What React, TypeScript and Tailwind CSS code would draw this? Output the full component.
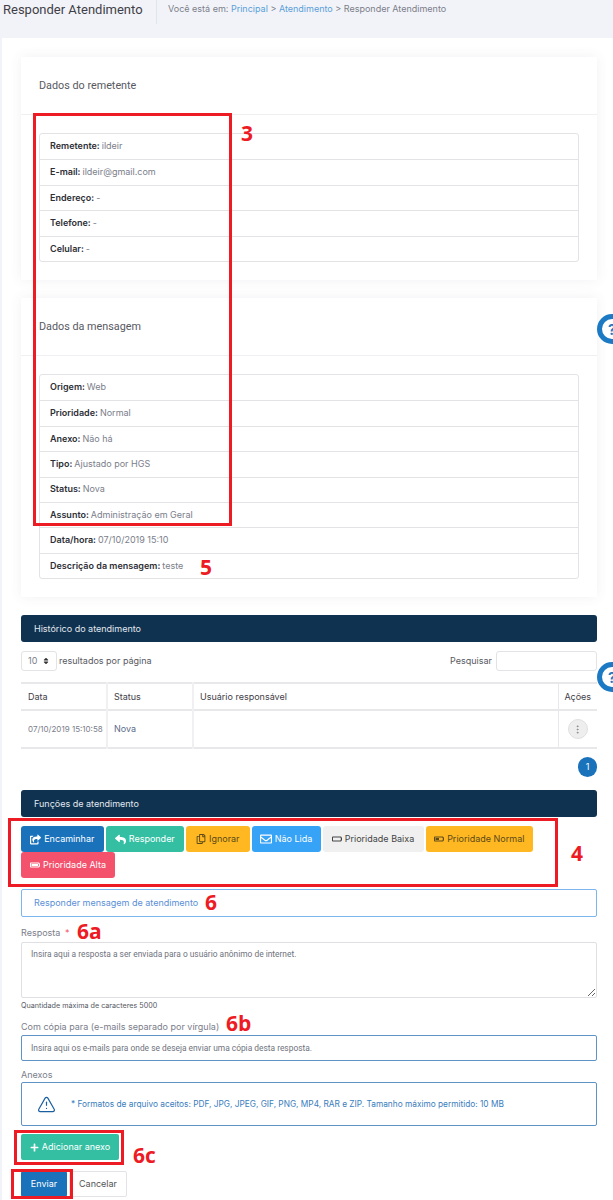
import React from 'react';
import { FaShareSquare, FaReply, FaRegCopy, FaRegEnvelope, FaBatteryEmpty, FaBatteryHalf, FaBatteryFull, FaPlus, FaSort } from 'react-icons/fa';
import { TriangleAlert, MoreVertical } from 'lucide-react';

const remetente = [
  ['Remetente:', 'ildeir'],
  ['E-mail:', 'ildeir@gmail.com'],
  ['Endereço:', '-'],
  ['Telefone:', '-'],
  ['Celular:', '-'],
];

const mensagem = [
  ['Origem:', 'Web'],
  ['Prioridade:', 'Normal'],
  ['Anexo:', 'Não há'],
  ['Tipo:', 'Ajustado por HGS'],
  ['Status:', 'Nova'],
  ['Assunto:', 'Administração em Geral'],
  ['Data/hora:', '07/10/2019 15:10'],
  ['Descrição da mensagem:', 'teste'],
];

const acoes = [
  { label: 'Encaminhar', icon: <FaShareSquare size={11} />, cls: 'w-[82.5px] bg-[#1a72bb] text-white' },
  { label: 'Responder', icon: <FaReply size={11} />, cls: 'w-[78.5px] bg-[#34bfa3] text-white' },
  { label: 'Ignorar', icon: <FaRegCopy size={10} />, cls: 'w-[63.5px] bg-[#ffb822] text-[#5c4a1a]' },
  { label: 'Não Lida', icon: <FaRegEnvelope size={12} />, cls: 'w-[69px] bg-[#36a3f7] text-white' },
  { label: 'Prioridade Baixa', icon: <FaBatteryEmpty size={10} />, cls: 'w-[101px] bg-[#f0f0f0] text-[#444]' },
  { label: 'Prioridade Normal', icon: <FaBatteryHalf size={10} />, cls: 'w-[107.5px] bg-[#ffb822] text-[#5c4a1a]' },
  { label: 'Prioridade Alta', icon: <FaBatteryFull size={10} />, cls: 'w-[94px] bg-[#f4516c] text-white' },
];

function DadosCard({ titulo, linhas }: { titulo: string; linhas: string[][] }) {
  return (
    <section className="bg-white shadow-[0_0_12px_rgba(80,80,120,0.08)]">
      <h3 className="flex h-[58px] items-center border-b border-[#f0f0f3] pt-[1px] pl-[18px] font-['Roboto',sans-serif] text-[10.8px] text-[#575962]">
        {titulo}
      </h3>
      <div className="p-[18px]">
        <ul className="rounded-[3px] border border-[#e3e3e6]">
          {linhas.map(([k, v], i) => (
            <li
              key={k}
              className={`flex h-[25.4px] items-center pb-[1px] pl-[10px] text-[9px] text-[#7b7e8a] ${i > 0 ? 'border-t border-[#e3e3e6]' : ''}`}
            >
              <b className="mr-[2px] font-semibold text-[#2e2f36]">{k}</b>
              {v}
            </li>
          ))}
        </ul>
      </div>
    </section>
  );
}

function BarraTitulo({ titulo }: { titulo: string }) {
  return (
    <div className="flex h-[27px] items-center rounded-[3px] bg-[#0e3250] pl-[13px] text-[9px] text-[#e4e8ee]">
      {titulo}
    </div>
  );
}

function Marca({ className, children }: { className: string; children: React.ReactNode }) {
  return (
    <span className={`absolute font-['Open_Sans',sans-serif] text-[21px] leading-none font-bold text-[#ed1c24] ${className}`}>
      {children}
    </span>
  );
}

function Ajuda({ top }: { top: string }) {
  return (
    <div className={`absolute left-[597px] flex h-[30px] w-[30px] items-center justify-center rounded-full border-[5px] border-[#1b7ac3] bg-white text-[14px] font-bold text-[#1b7ac3] ${top}`}>
      ?
    </div>
  );
}

export default function App() {
  return (
    <div className="relative h-[1200px] w-[613px] overflow-hidden bg-[#f2f3f8] font-['Inter',sans-serif]">
      {/* topo */}
      <header className="flex h-[38px] items-start">
        <h1 className="w-[142px] pl-[3px] font-['Roboto',sans-serif] text-[13px] leading-[19px] whitespace-nowrap text-[#3f4047]">
          Responder Atendimento
        </h1>
        <div className="ml-[14px] h-[24px] w-px bg-[#e2e4ec]" />
        <p className="ml-[11px] pt-[2px] text-[9px] leading-[14px] text-[#7b7e8a]">
          Você está em: <span className="text-[#5a9fd8]">Principal</span> &gt;{' '}
          <span className="text-[#5a9fd8]">Atendimento</span> &gt; Responder Atendimento
        </p>
      </header>

      {/* conteudo */}
      <main className="ml-[2px] h-[1162px] bg-white pt-[19px] pr-[16px] pl-[19px]">
        <DadosCard titulo="Dados do remetente" linhas={remetente} />
        <div className="mt-[18px]">
          <DadosCard titulo="Dados da mensagem" linhas={mensagem} />
        </div>

        <div className="mt-[18px]">
          <BarraTitulo titulo="Histórico do atendimento" />
        </div>

        <div className="mt-[9px] flex h-[20px] items-center justify-between text-[9px] text-[#575962]">
          <div className="flex items-center gap-[2px]">
            <div className="flex h-[20px] w-[36px] items-center justify-between rounded-[3px] border border-[#e3e3e6] px-[6px] text-[#7b7e8a]">
              10 <FaSort size={8} className="text-[#333]" />
            </div>
            resultados por página
          </div>
          <div className="flex items-center gap-[4px]">
            Pesquisar
            <div className="h-[20px] w-[101px] rounded-[3px] border border-[#e3e3e6] bg-white" />
          </div>
        </div>

        <table className="mt-[11px] h-[67px] w-full table-fixed border-collapse border-y-2 border-[#e8e8eb] text-left text-[9px]">
          <thead>
            <tr className="h-[27px] border-b-2 border-[#e8e8eb] text-[#3f4047]">
              <th className="w-[86px] pl-[7px] font-normal">Data</th>
              <th className="w-[86px] border-l-2 border-[#f0f0f2] pl-[6px] font-normal">Status</th>
              <th className="border-l-2 border-[#f0f0f2] pl-[6px] font-normal">Usuário responsável</th>
              <th className="w-[39px] border-l border-[#e8e8eb] text-center font-normal">Ações</th>
            </tr>
          </thead>
          <tbody>
            <tr className="text-[#7b7e8a]">
              <td className="pl-[7px] text-[8px] whitespace-nowrap">07/10/2019 15:10:58</td>
              <td className="border-l-2 border-[#f0f0f2] pl-[6px] text-[#5d6d8a]">Nova</td>
              <td className="border-l-2 border-[#f0f0f2]" />
              <td className="border-l border-[#e8e8eb]">
                <div className="mx-auto flex h-[20px] w-[20px] items-center justify-center rounded-full border border-[#e0e0e0] bg-[#eeeeee] text-[#888]">
                  <MoreVertical size={11} />
                </div>
              </td>
            </tr>
          </tbody>
        </table>

        <div className="mt-[8px] flex justify-end">
          <div className="flex h-[20px] w-[19px] items-center justify-center rounded-full bg-[#1a72bb] text-[9px] text-white">1</div>
        </div>

        <div className="mt-[13px]">
          <BarraTitulo titulo="Funções de atendimento" />
        </div>

        <div className="mt-[9px] flex flex-wrap gap-x-[2px]">
          {acoes.map((a) => (
            <button
              key={a.label}
              className={`flex h-[26px] items-center justify-center gap-[3px] rounded-[3px] text-[9px] whitespace-nowrap ${a.cls}`}
            >
              {a.icon}
              {a.label}
            </button>
          ))}
        </div>

        <div className="mt-[11px] flex h-[28px] items-center rounded-[2px] border border-[#7db5ee] pl-[12px] text-[9px] text-[#5a8fd8]">
          Responder mensagem de atendimento
        </div>

        <label className="mt-[7px] block h-[18px] text-[9px] leading-[18px] text-[#7b7e8a]">
          Resposta <span className="ml-[2px] text-[#f4516c]">*</span>
        </label>
        <textarea
          readOnly
          className="block h-[56px] w-full rounded-[2px] border border-[#e0e0e4] px-[9px] py-[5px] font-['Roboto',sans-serif] text-[8.4px] text-[#6f727d]"
          value="Insira aqui a resposta a ser enviada para o usuário anônimo de internet."
        />
        <p className="mt-[2px] h-[12px] text-[7.2px] leading-[12px] text-[#55585f]">Quantidade máxima de caracteres 5000</p>

        <label className="mt-[6px] block h-[17px] text-[9px] leading-[17px] text-[#7b7e8a]">Com cópia para (e-mails separado por vírgula)</label>
        <div className="flex h-[26px] items-center rounded-[2px] border border-[#5f93c5] pl-[9px] font-['Roboto',sans-serif] text-[8.4px] text-[#6f727d]">
          Insira aqui os e-mails para onde se deseja enviar uma cópia desta resposta.
        </div>

        <label className="mt-[7px] block h-[14px] text-[9px] leading-[14px] text-[#7b7e8a]">Anexos</label>
        <div className="flex h-[44px] items-center rounded-[2px] border border-[#5f93c5] pl-[15px] text-[8.3px] text-[#3a7dbd]">
          <TriangleAlert size={19} strokeWidth={1.5} className="text-[#1a5fa0]" />
          <span className="ml-[15px] whitespace-nowrap">* Formatos de arquivo aceitos: PDF, JPG, JPEG, GIF, PNG, MP4, RAR e ZIP. Tamanho máximo permitido: 10 MB</span>
        </div>

        <button className="mt-[8px] flex h-[26px] w-[98px] items-center justify-center gap-[3px] rounded-[2px] bg-[#34bfa3] text-[9px] text-white">
          <FaPlus size={9} /> Adicionar anexo
        </button>

        <div className="mt-[11px] flex">
          <button className="h-[26px] w-[46px] rounded-[2px] bg-[#1a72bb] text-[9px] text-white">Enviar</button>
          <button className="ml-[2px] h-[26px] w-[58px] rounded-[2px] border border-[#e3e3e6] text-[9px] text-[#555]">Cancelar</button>
        </div>
      </main>

      {/* botoes de ajuda */}
      <Ajuda top="top-[314px]" />
      <Ajuda top="top-[662px]" />

      {/* anotacoes vermelhas */}
      <div className="absolute top-[113px] left-[33px] h-[413px] w-[199px] border-[3px] border-[#ed1c24]" />
      <div className="absolute top-[818px] left-[8px] h-[69px] w-[550px] border-[3px] border-[#ed1c24]" />
      <div className="absolute top-[1130px] left-[14px] h-[35px] w-[110px] border-[3px] border-[#ed1c24]" />
      <div className="absolute top-[1169px] left-[11px] h-[30px] w-[62px] border-[3px] border-[#ed1c24]" />
      <Marca className="top-[123px] left-[241px]">3</Marca>
      <Marca className="top-[557px] left-[200px]">5</Marca>
      <Marca className="top-[843px] left-[571px]">4</Marca>
      <Marca className="top-[892px] left-[205px]">6</Marca>
      <Marca className="top-[921px] left-[77px]">6a</Marca>
      <Marca className="top-[1013px] left-[226px]">6b</Marca>
      <Marca className="top-[1145px] left-[133px]">6c</Marca>
    </div>
  );
}
